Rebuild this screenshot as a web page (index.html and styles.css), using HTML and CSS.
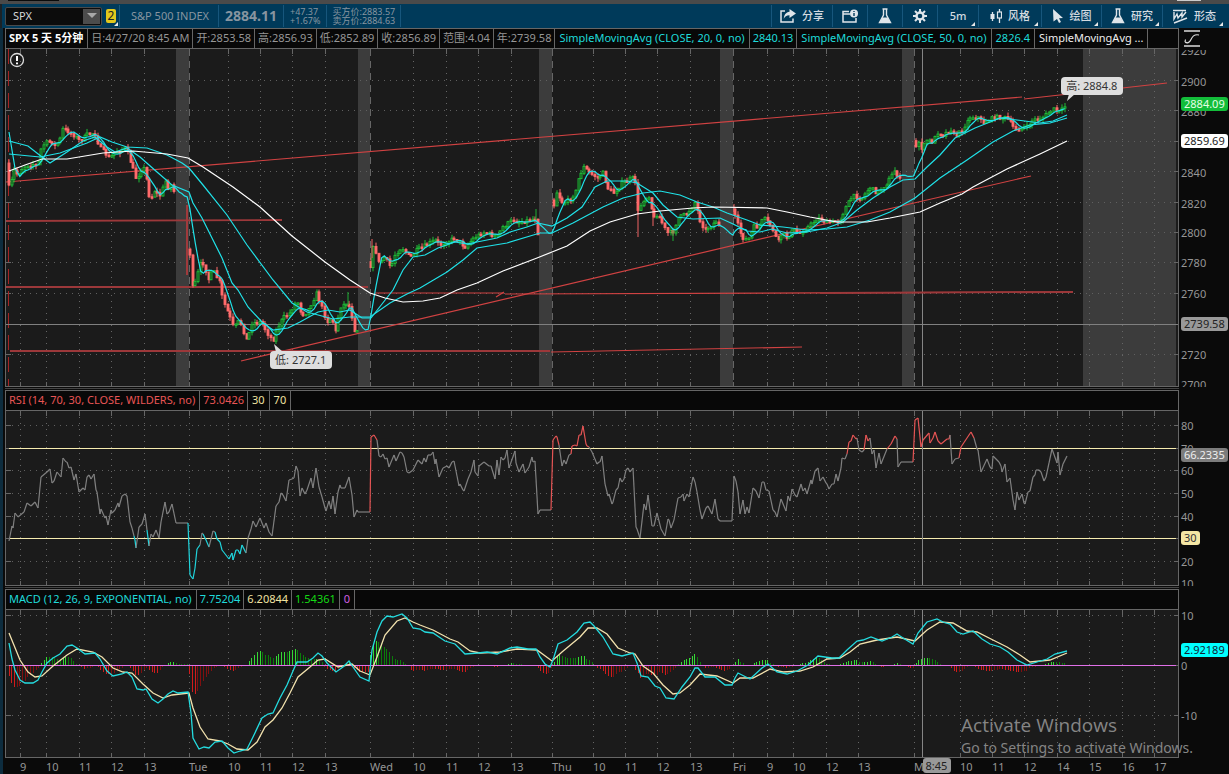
FILE: index.html
```html
<!DOCTYPE html>
<html lang="zh-CN">
<head>
  <meta charset="UTF-8">
  <title>SPX Charts</title>
  <link rel="stylesheet" href="styles.css">
</head>
<body>

<div class="top-strip"><span class="strip-tab"></span><span class="strip-mark"></span></div>

<header class="toolbar">
  <div class="symbol-box">
    <input class="symbol-input" type="text" value="SPX" aria-label="Symbol">
    <button class="symbol-drop" aria-label="Symbol list"><svg width="10" height="6" viewBox="0 0 10 6"><path d="M0 0h10L5 5z" fill="#a8a8a8"/></svg></button>
  </div>
  <button class="link-badge corner">2</button>
  <div class="quote name">S&amp;P 500 INDEX</div>
  <div class="quote last">2884.11</div>
  <div class="quote pair"><span>+47.37</span><span>+1.67%</span></div>
  <div class="quote pair"><span>买方价:2883.57</span><span>卖方价:2884.63</span></div>
  <nav class="tools">
    <button class="tool share">
      <svg width="16" height="14" viewBox="0 0 16 14"><path d="M5 2H1v11h12V9.500" fill="none" stroke="#dfe5ea" stroke-width="1.500"/><path d="M9.500 0 16 4.500 9.500 9V6.300C6.500 6.200 5 7.500 3.800 9.800 4 6 5.800 3 9.500 2.700z" fill="#dfe5ea"/></svg>
      分享
    </button>
    <button class="tool icon" aria-label="Info">
      <svg width="16" height="14" viewBox="0 0 16 14"><path d="M7 2.500H1V13h13V9M1 5h7" fill="none" stroke="#dfe5ea" stroke-width="1.500"/><circle cx="12" cy="4.500" r="4" fill="#dfe5ea"/><path d="M12 4v3M12 2v1" stroke="#003a5a" stroke-width="1.400"/></svg>
    </button>
    <button class="tool icon" aria-label="Lab">
      <svg width="14" height="16" viewBox="0 0 14 16"><path d="M4.500 1h5M5.500 1v6L1.500 14.500h11L8.500 7V1" fill="none" stroke="#dfe5ea" stroke-width="1.400"/><path d="M4.500 9.500h5l3 5h-11z" fill="#dfe5ea"/></svg>
    </button>
    <button class="tool icon" aria-label="Settings">
      <svg width="14" height="14" viewBox="-7 -7 14 14"><circle r="3.500" fill="none" stroke="#dfe5ea" stroke-width="2.400"/><path d="M0-7v3M0 4v3M-7 0h3M4 0h3M-5-5l2 2M3 3l2 2M-5 5l2-2M3-3l2-2" stroke="#dfe5ea" stroke-width="2"/></svg>
    </button>
    <button class="tool period corner">5m</button>
    <button class="tool style corner">
      <svg width="12" height="14" viewBox="0 0 12 14"><path d="M2.500 3v9M9.500 0v14" stroke="#dfe5ea" stroke-width="1.300"/><rect x="0.500" y="5" width="4" height="5" fill="#dfe5ea"/><rect x="7.500" y="3" width="4" height="6" fill="#003a5a" stroke="#dfe5ea" stroke-width="1.200"/></svg>
      风格
    </button>
    <button class="tool draw corner">
      <svg width="12" height="14" viewBox="0 0 12 14"><path d="M1 0 11 9 7 9.300 9 13 7 14 5 10 1.500 12.500z" fill="#dfe5ea"/></svg>
      绘图
    </button>
    <button class="tool study corner">
      <svg width="14" height="16" viewBox="0 0 14 16"><path d="M4.500 1h5M5.500 1v6L1.500 14.500h11L8.500 7V1" fill="none" stroke="#dfe5ea" stroke-width="1.400"/><path d="M4.500 9.500h5l3 5h-11z" fill="#dfe5ea"/></svg>
      研究
    </button>
    <button class="tool pattern corner">
      <svg width="15" height="15" viewBox="0 0 15 15"><path d="M0 1.500h13M1 3v7l3-5 1 4 4-5v4l4-5M1 14l13-5" fill="none" stroke="#dfe5ea" stroke-width="1.400"/></svg>
      形态
    </button>
  </nav>
</header>

<main class="charts">
  <section class="panel price">
    <div class="side">
      <div class="legend">
        <span class="cell title">SPX 5 天 5分钟</span>
        <span class="cell">日:4/27/20 8:45 AM</span>
        <span class="cell">开:2853.58</span>
        <span class="cell">高:2856.93</span>
        <span class="cell">低:2852.89</span>
        <span class="cell">收:2856.89</span>
        <span class="cell">范围:4.04</span>
        <span class="cell">年:2739.58</span>
        <span class="cell wide cyan">SimpleMovingAvg (CLOSE, 20, 0, no)</span>
        <span class="cell cyan">2840.13</span>
        <span class="cell wide cyan">SimpleMovingAvg (CLOSE, 50, 0, no)</span>
        <span class="cell wide cyan">2826.4</span>
        <span class="cell wide white">SimpleMovingAvg ...</span>
      </div>
      <div class="plot">
        <svg class="canvas" id="price" viewBox="6 49 1172 337" preserveAspectRatio="none"></svg>
        <svg class="alert" width="16" height="16" viewBox="0 0 16 16"><circle cx="8" cy="8" r="6.500" fill="none" stroke="#ddd" stroke-width="1.300"/><path d="M8 4v5M8 10.500v1.700" stroke="#fff" stroke-width="2"/></svg>
        <div class="callout high">高: 2884.8</div>
        <div class="callout low">低: 2727.1</div>
      </div>
    </div>
    <div class="scale">
      <div class="scale-head">
        <svg width="17" height="17" viewBox="0 0 17 17"><path d="M0 1h16M0 16h16" stroke="#ddd" stroke-width="1.500"/><path d="M1 12c2 1.500 4.500 1 6-2.500S11 4 15 5M1 12l.5-2.500M1 12l2.500.8" fill="none" stroke="#ddd" stroke-width="1.200"/></svg>
      </div>
      <div class="scale-body">
        <svg class="canvas" id="price-scale"></svg>
        <span class="tag green">2884.09</span>
        <span class="tag paper">2859.69</span>
        <span class="tag gray">2739.58</span>
      </div>
    </div>
  </section>

  <div class="divider"></div>

  <section class="panel rsi">
    <div class="side">
      <div class="legend">
        <span class="cell red">RSI (14, 70, 30, CLOSE, WILDERS, no)</span>
        <span class="cell red">73.0426</span>
        <span class="cell wide sand">30</span>
        <span class="cell wide sand">70</span>
      </div>
      <div class="plot">
        <svg class="canvas" id="rsi" viewBox="6 411 1172 174" preserveAspectRatio="none"></svg>
      </div>
    </div>
    <div class="scale">
      <div class="scale-head"></div>
      <div class="scale-body">
        <svg class="canvas" id="rsi-scale"></svg>
        <span class="tag dim">66.2335</span>
        <span class="tag yellow">30</span>
      </div>
    </div>
  </section>

  <div class="divider"></div>

  <section class="panel macd">
    <div class="side">
      <div class="legend">
        <span class="cell cyan">MACD (12, 26, 9, EXPONENTIAL, no)</span>
        <span class="cell cyan">7.75204</span>
        <span class="cell sand">6.20844</span>
        <span class="cell lime">1.54361</span>
        <span class="cell wide violet">0</span>
      </div>
      <div class="plot">
        <svg class="canvas" id="macd" viewBox="6 610 1172 147" preserveAspectRatio="none"></svg>
      </div>
    </div>
    <div class="scale">
      <div class="scale-head"></div>
      <div class="scale-body">
        <svg class="canvas" id="macd-scale"></svg>
        <span class="tag aqua">2.92189</span>
      </div>
    </div>
  </section>

  <div class="time-axis">
    <svg class="canvas" id="time-scale"></svg>
    <span class="time-tag">8:45</span>
  </div>
</main>

<div class="watermark">
  <p class="wm-title">Activate Windows</p>
  <p class="wm-text">Go to Settings to activate Windows.</p>
</div>

<script src="chart.js"></script>
</body>
</html>
```
FILE: styles.css
```css
* { box-sizing: border-box; }
body {
  margin: 0;
  height: 100vh;
  display: flex;
  flex-direction: column;
  overflow: hidden;
  position: relative;
  background: #0a0a0a;
  color: #969696;
  font: 11px/14px "Noto Sans", "Noto Sans CJK SC", sans-serif;
}
button, input { font: inherit; color: inherit; border: none; margin: 0; padding: 0; }
button { cursor: pointer; }

.top-strip {
  flex: 0 0 4px;
  display: flex;
  justify-content: space-between;
  background: #4a4a4a;
  padding: 0 28px 0 8px;
}
.strip-tab { width: 51px; height: 1px; background: #0a0a0a; }
.strip-mark { width: 24px; height: 1px; background: #ccc; }

/* toolbar */
.toolbar {
  flex: 0 0 24px;
  display: flex;
  align-items: center;
  background: #003a5a;
  border-left: 2px solid #1c2226;
  padding: 0 3px;
  color: #8795a0;
}
.symbol-box {
  display: flex;
  width: 97px;
  height: 19px;
  padding: 1px;
  background: #0c0c0c;
  border: 1px solid #4a4a4a;
  border-radius: 2px;
}
.symbol-input { flex: 1; min-width: 0; padding-left: 6px; background: none; color: #d8d8d8; outline: none; }
.symbol-drop { width: 17px; background: #4c4c4c; display: flex; align-items: center; justify-content: center; }
.link-badge {
  width: 10px;
  height: 14px;
  margin: 0 3px 0 4px;
  border-radius: 2px;
  background: #e2c71c;
  color: #222;
  font-size: 12px;
  line-height: 14px;
}
.corner { position: relative; }
.corner::after {
  content: "";
  position: absolute;
  right: 3px;
  bottom: 1px;
  border-left: 4px solid transparent;
  border-bottom: 4px solid #e8e8e8;
}
.link-badge::after { right: -2px; bottom: -3px; }
.quote { height: 22px; display: flex; align-items: center; padding: 0 6px; border-left: 1px solid #17567c; white-space: nowrap; }
.quote.name { padding: 0 9px 0 11px; }
.quote.last { font-size: 14px; font-weight: bold; }
.quote.pair { flex-direction: column; align-items: flex-start; justify-content: center; padding: 0 5px 0 6px; font-size: 9px; line-height: 9px; }
.quote.pair:last-of-type { border-right: 1px solid #17567c; }
.tools { margin-left: auto; display: flex; }
.tool {
  height: 22px;
  display: flex;
  align-items: center;
  justify-content: center;
  gap: 6px;
  background: none;
  color: #d4dbe0;
  font-weight: 500;
  border-left: 1px solid #17567c;
}
.tool.icon { width: 35px; }
.tool.share { width: 61px; }
.tool.period { width: 41px; }
.tool.style { width: 63px; }
.tool.draw { width: 60px; }
.tool.study { width: 61px; }
.tool.pattern { width: 64px; }

/* chart panels */
.charts { flex: 1; min-height: 0; display: flex; flex-direction: column; padding-left: 5px; box-shadow: inset 3px 0 #0d2c3e; }
.panel { display: flex; min-height: 0; }
.price { flex: 359 1 0; }
.rsi { flex: 196 1 0; }
.macd { flex: 169 1 0; }
.side { flex: 1; min-width: 0; display: flex; flex-direction: column; border: 1px solid #666; }
.legend { flex: 0 0 19px; display: flex; background: #080808; }
.cell { padding: 0 3px; border-right: 1px solid #666; line-height: 18px; white-space: nowrap; }
.cell:first-child { padding-right: 4px; }
.cell.wide { padding: 0 4px; }
.title { color: #fff; font-weight: bold; }
.white { color: #eee; }
.cyan { color: #1fdada; }
.red { color: #e85555; }
.sand { color: #f0e2a2; }
.lime { color: #14d814; }
.violet { color: #cf5fe0; }
.plot { position: relative; flex: 1; min-height: 0; border-top: 1px solid #666; background: #1b1b1b; }
.canvas { display: block; width: 100%; height: 100%; }
.divider { flex: 0 0 3px; margin-right: 50px; border: solid #0a0a0a; border-width: 1px 0; background: #444; }

.alert { position: absolute; left: 3px; top: 3px; }
.callout {
  position: absolute;
  width: 62px;
  height: 18px;
  border-radius: 4px;
  background: #dedede;
  color: #333;
  line-height: 18px;
  text-align: center;
  white-space: nowrap;
}
.high { left: 90%; top: 8.300%; }
.low { left: 22.500%; top: 89.600%; }

/* value scales */
.scale { flex: 0 0 50px; display: flex; flex-direction: column; }
.scale-head { flex: 0 0 21px; padding: 2px 0 0 5px; }
.scale-body { position: relative; flex: 1; min-height: 0; overflow: hidden; }
.scale text, .time-axis text { fill: #969696; }
.tag {
  position: absolute;
  left: 2px;
  height: 14px;
  padding: 0 3px;
  border-radius: 3px;
  line-height: 13px;
}
.green { top: 13.900%; background: #13bd3a; color: #e6ffe6; }
.paper { top: 24.900%; background: #fff; color: #222; }
.gray { top: 79.300%; background: #999; color: #222; }
.dim { top: 21.200%; background: #7c7c7c; color: #eee; }
.yellow { top: 68.300%; background: #f4e6a4; color: #333; }
.aqua { top: 22.600%; background: #0ff; color: #123; }

.time-axis { position: relative; flex: 0 0 16px; min-height: 0; margin: 0 51px 0 1px; }
.time-axis .canvas { overflow: visible; }
.time-tag {
  position: absolute;
  left: 78.200%;
  top: 0;
  width: 28px;
  height: 15px;
  border-radius: 3px;
  background: #999;
  color: #222;
  line-height: 15px;
  text-align: center;
}

.watermark { position: absolute; right: 36px; bottom: 16px; color: #858585; pointer-events: none; }
.watermark p { margin: 0; white-space: nowrap; }
.wm-title { font: 19px/26px "Open Sans", sans-serif; }
.wm-text { font-size: 14px; line-height: 20px; }
```
FILE: chart.js
```javascript
const NS = 'http://www.w3.org/2000/svg';

function add(parent, tag, attrs, text) {
  const el = document.createElementNS(NS, tag);
  for (const k in attrs) el.setAttribute(k, attrs[k]);
  if (text) el.textContent = text;
  parent.appendChild(el);
  return el;
}

// "x,y x,y ..." -> [[x, y], ...]
const pts = s => s.trim().split(/\s+/).map(p => p.split(',').map(Number));

function valueAt(list, x) {
  for (let i = 1; i < list.length; i++) {
    if (x <= list[i][0]) {
      const [x0, y0] = list[i - 1], [x1, y1] = list[i];
      return y0 + (y1 - y0) * (x - x0) / ((x1 - x0) || 1);
    }
  }
  return list[list.length - 1][1];
}

const line = (svg, list, color, width = 1.2) =>
  add(svg, 'polyline', { points: list.map(p => p.join()).join(' '), fill: 'none', stroke: color, 'stroke-width': width });

const hours = [
  [20, '9'], [46, '10'], [79, '11'], [111, '12'], [144, '13'], [189, 'Tue', 1],
  [228, '10'], [260, '11'], [292, '12'], [325, '13'], [370, 'Wed', 1],
  [413, '10'], [446, '11'], [478, '12'], [511, '13'], [552, 'Thu', 1],
  [593, '10'], [625, '11'], [657, '12'], [690, '13'], [733, 'Fri', 1],
  [767, '9'], [793, '10'], [826, '12'], [858, '13'], [914, 'M', 1],
  [960, '10'], [992, '11'], [1024, '12'], [1057, '14'], [1089, '15'], [1122, '16'], [1154, '17']
];

function grid(svg, top, bottom, levels, dashDays) {
  const g = add(svg, 'g', { stroke: '#666', 'shape-rendering': 'crispEdges' });
  levels.forEach(y => {
    add(g, 'path', { d: `M6 ${y + .5}H1174`, 'stroke-dasharray': '1 5', stroke: '#606060' });
    add(g, 'path', { d: `M6 ${y + .5}h5M1174 ${y + .5}h4` });
  });
  hours.forEach(([x, , day]) => {
    add(g, 'path', { d: `M${x + .5} ${top}V${bottom}`, 'stroke-dasharray': day && dashDays ? '7 5' : '1 5' });
    add(g, 'path', { d: `M${x + .5} ${top}v5M${x + .5} ${bottom - 4}v4` });
  });
}

function crosshair(svg, top, bottom) {
  add(svg, 'path', { d: `M922.5 ${top}V${bottom}`, stroke: '#858585', 'shape-rendering': 'crispEdges' });
}

const closes = pts(`9,187 12,180 14,170 18,175 22,169 27,165 33,164 38,166 41,150 45,143 52,141 53,148 60,140 63,129 68,131 75,136
80,141 88,134 95,133 100,148 110,158 115,152 126,148 130,160 137,181 140,170 145,168 149,195 153,197 155,190 160,196 166,180 168,188
172,184 175,197 188,197 190,257 193,292 197,276 202,260 205,267 209,280 213,270 220,283 223,300 230,317 234,328 240,320 247,341
252,323 262,322 267,332 273,341 278,327 283,318 290,313 297,300 302,315 307,312 312,303 317,293 322,307 327,322 332,318 336,333
340,307 348,302 352,317 355,332 358,329 370,329 371,250 375,247 379,263 385,257 391,268 395,255 402,247 410,258 417,250 423,247
435,240 440,245 455,238 465,247 475,237 485,232 497,237 503,227 513,220 520,222 530,220 536,218 538,233 552,233 554,207 557,192
563,203 570,200 577,190 579,177 584,167 590,173 598,178 603,173 608,188 614,193 622,183 635,177 638,212 643,200 650,195 653,220
658,213 667,233 673,232 678,218 688,213 695,202 700,220 705,230 718,220 721,235 733,235 734,213 742,237 748,240 755,225 758,228
764,218 772,227 778,243 782,233 787,238 793,230 800,233 808,227 818,218 828,223 840,220 847,205 853,196 862,198 870,187 877,193
887,183 895,170 900,180 902,176 914,176 916,148 920,140 922,150 927,140 933,142 938,132 943,135 951,129 955,137 962,130 970,117
978,117 983,123 995,117 1007,118 1015,129 1027,127 1033,120 1042,118 1053,109 1060,112 1067,104`);

const ma20 = pts(`9,141 28,146 42,157 50,163 67,152 83,141 95,137 107,147 115,152 127,148 140,157 157,172 172,185 189,192 193,203
202,218 212,238 222,258 232,283 238,290 248,307 262,322 273,330 288,328 300,322 318,312 328,310 340,312 350,310 362,318 371,318
393,290 403,270 413,257 425,255 438,248 455,242 467,244 497,238 510,232 527,227 538,223 552,226 567,218 582,207 595,187 607,181
627,181 637,183 653,193 663,205 677,217 693,219 720,218 733,224 747,231 760,232 772,229 787,233 807,232 827,228 843,222 857,210
873,198 890,187 903,180 915,179 927,167 940,155 955,138 975,128 1000,118 1017,120 1040,123 1053,121 1067,115`);

const ma50 = pts(`9,154 40,157 60,153 87,143 100,137 112,142 127,147 147,148 167,155 182,163 189,168 203,185 227,215 247,245 273,280
292,303 307,312 333,319 350,317 370,317 390,303 407,294 420,288 447,272 463,260 477,248 507,243 540,233 552,233 573,223 603,207
623,198 643,193 660,191 680,195 697,202 713,207 727,213 747,220 760,225 783,227 807,230 827,229 847,227 870,220 890,212 915,198
940,178 967,160 993,142 1013,131 1030,125 1050,123 1067,118`);

const ma100 = pts(`9,171 25,165 42,159 67,159 103,153 133,151 167,154 188,158 203,167 233,187 260,207 292,236 325,262 350,280 370,293
385,298 403,302 423,301 440,298 457,290 477,283 503,271 537,258 567,246 590,231 610,222 637,214 660,211 693,208 713,207 767,208
787,212 810,217 837,222 867,222 890,218 920,212 940,203 962,194 973,187 1007,169 1040,154 1067,141`);

const nights = [[176, 189], [358, 370], [539, 552], [720, 733], [902, 914]];
const STEP = 2.7;

function drawPrice() {
  const svg = document.getElementById('price');
  nights.concat([[1083, 1176]]).forEach(([a, b]) =>
    add(svg, 'rect', { x: a, y: 49, width: b - a, height: 337, fill: '#3c3c3c' }));
  grid(svg, 49, 386, [80, 110, 141, 171, 202, 232, 262, 293, 324, 354], true);
  add(svg, 'path', { d: 'M8.5 49V386', stroke: '#a32424', 'stroke-dasharray': '15 7' });
  add(svg, 'path', { d: 'M6 324.500H1178', stroke: '#808080', 'shape-rendering': 'crispEdges' });
  crosshair(svg, 49, 386);

  // hand drawn trend lines
  [[6, 182, 1022, 97], [1024, 99, 1167, 83], [241, 361, 914, 203], [914, 203, 1031, 176],
   [496, 297, 504, 292], [375, 293, 504, 293], [505, 294, 1073, 292], [551, 352, 802, 347]].forEach(l =>
    add(svg, 'line', { x1: l[0], y1: l[1], x2: l[2], y2: l[3], stroke: '#d04242', 'stroke-width': 1.2 }));
  [[6, 221, 282, 220], [6, 287, 368, 287], [10, 351, 550, 351], [820, 293, 1073, 292]].forEach(l =>
    add(svg, 'line', { x1: l[0], y1: l[1], x2: l[2], y2: l[3], stroke: '#9c383a', 'stroke-width': 1.8 }));
  add(svg, 'path', { d: 'M187 205V275', stroke: '#a03a3c', 'stroke-width': 2 });

  let seed = 7;
  const rnd = () => (seed = (seed * 16807) % 2147483647) / 2147483647;
  const bars = [];
  let prev = 163;
  for (let x = 9; x <= 1067; x += STEP) {
    const night = nights.some(n => x > n[0] && x < n[1]);
    const y = valueAt(closes, x) + (night ? 0 : (rnd() - .5) * 4);
    bars.push([x, y]);
    const gap = nights.some(n => x >= n[1] && x < n[1] + STEP);
    const open = gap ? y - 6 : prev;
    if (!night) {
      const up = y < open, color = up ? '#1fbf38' : '#ff6b6b';
      const top = Math.min(y, open), h = Math.max(1.5, Math.abs(y - open));
      const px = Math.round(x);
      add(svg, 'path', { d: `M${px} ${top - rnd() * 4}V${top + h + rnd() * 4}`, stroke: color });
      add(svg, 'rect', { x: px - 1, y: top, width: 2, height: h, fill: up ? '#12401b' : color, stroke: color, 'stroke-width': .9 });
    }
    prev = y;
  }
  [[638, 205, 237, '#f06464'], [653, 210, 226, '#f06464'], [673, 228, 241, '#1eb035'], [536, 209, 220, '#1eb035'],
   [348, 292, 305, '#1eb035'], [372, 239, 258, '#f06464'], [734, 204, 216, '#f06464']].forEach(w =>
    add(svg, 'path', { d: `M${w[0]} ${w[1]}V${w[2]}`, stroke: w[3] }));

  const fast = bars.map((b, i) => {
    const part = bars.slice(Math.max(0, i - 4), i + 1);
    return [b[0], part.reduce((s, p) => s + p[1], 0) / part.length];
  });
  line(svg, [[9, 132], [15, 168]].concat(fast.slice(4)), '#20e2e8');
  line(svg, ma20, '#20e2e8');
  line(svg, ma50, '#20e2e8');
  line(svg, ma100, '#fff');

  add(svg, 'path', { d: 'M1069 94H1075L1067 101zM276 352H283L274 344z', fill: '#dedede' });
}

const rsi = pts(`9,541 12,526 13,528 15,513 18,517 24,512 27,503 31,506 35,502 38,508 41,477 47,472 50,469 52,483 54,481 57,472
61,477 63,458 66,462 67,462 69,468 71,467 74,480 76,474 79,492 83,488 85,490 87,477 89,475 91,479 94,474 96,490 97,492 100,514
101,509 105,518 106,516 108,525 111,510 112,513 115,510 118,503 119,507 122,496 125,494 127,496 130,522 132,528 134,536 135,540
136,548 139,527 142,524 145,514 147,530 149,546 151,534 153,537 156,530 159,538 161,522 165,502 167,514 169,512 172,504 176,523
188,523 190,575 193,579 195,568 197,549 200,545 202,533 203,534 206,540 209,547 213,531 215,532 217,539 220,542 222,550 229,559
232,553 233,560 236,550 238,550 240,554 242,545 246,553 248,538 251,529 253,521 256,527 260,518 264,528 266,523 269,532 272,536
276,506 279,502 281,493 283,495 286,501 289,480 292,479 294,478 296,466 298,471 300,496 302,488 305,494 307,490 311,478 313,488
316,468 319,487 322,497 325,508 326,511 329,501 331,509 333,496 335,514 338,492 340,485 341,488 345,488 349,477 352,495 354,517
357,510 358,512 370,512 371,437 374,435 377,440 379,456 381,457 383,454 385,459 387,458 389,467 394,455 396,461 400,452 402,453
404,457 407,472 409,473 413,470 418,460 422,464 424,458 426,462 428,455 431,455 433,452 435,464 436,459 439,477 443,468 447,466
449,468 452,462 454,461 459,486 460,484 463,490 464,491 468,479 471,472 474,460 475,472 478,476 479,466 484,462 489,466 491,466
495,479 497,460 499,475 501,457 503,460 505,458 507,450 509,468 515,451 516,463 519,472 523,464 525,473 529,467 532,457 533,462
535,461 538,514 540,510 551,510 553,440 556,436 557,437 559,445 562,466 564,460 566,464 569,455 571,454 572,446 575,445 577,446
579,435 581,435 583,426 586,444 587,446 589,447 592,452 597,464 599,462 600,462 602,456 605,484 608,496 609,494 612,504 613,502
616,490 618,488 620,478 622,482 624,479 626,470 628,468 630,472 633,468 636,527 637,529 640,538 644,504 646,510 648,495 652,526
654,526 657,513 661,529 665,536 668,519 669,520 671,528 674,520 678,498 681,497 683,494 684,501 687,494 689,497 692,482 693,477
695,482 697,492 700,510 702,519 706,508 708,506 712,514 715,499 718,519 720,521 732,521 734,476 736,481 738,492 740,514 743,500
745,514 747,507 749,513 753,488 756,491 759,498 762,482 764,482 766,490 769,491 773,510 775,512 777,517 781,499 786,511 788,496
790,501 792,489 795,495 797,497 801,484 803,491 805,488 807,494 811,480 812,484 815,471 818,468 820,481 823,477 826,483 827,484
829,489 832,484 834,484 836,474 838,481 841,468 842,458 845,459 847,454 849,442 851,441 853,435 856,439 857,438 859,450 862,452
864,450 866,435 868,441 870,438 872,454 874,450 876,468 879,453 881,464 887,449 891,444 895,436 897,439 898,467 901,462 913,462
915,420 918,418 921,447 923,440 929,433 930,443 933,438 935,432 938,441 941,444 947,439 949,439 950,435 952,464 955,459 959,458
961,447 967,438 971,432 974,438 977,449 978,450 981,472 987,459 990,467 992,469 993,456 999,462 1001,466 1002,472 1005,464
1007,482 1010,478 1013,500 1015,510 1017,492 1019,500 1022,494 1024,503 1025,504 1028,492 1030,491 1033,477 1035,475 1036,470
1039,470 1041,472 1044,481 1046,477 1049,463 1052,449 1057,463 1058,452 1060,475 1063,464 1067,456`);

function drawRsi() {
  const svg = document.getElementById('rsi');
  grid(svg, 411, 585, [425, 448, 470, 493, 516, 538, 561], false);
  add(svg, 'path', { d: 'M9 448.500H1176M9 538.500H1176', stroke: '#f7ecb0', 'shape-rendering': 'crispEdges' });
  crosshair(svg, 411, 585);
  for (let i = 1; i < rsi.length; i++) {
    const y = rsi[i][1];
    const color = y < 448 ? '#e45454' : y > 538 ? '#20d4dc' : '#808080';
    line(svg, [rsi[i - 1], rsi[i]], color);
  }
}

const macd = pts(`9,643 12,659 15,670 20,680 25,683 33,683 38,680 42,672 47,663 53,658 60,654 67,646 72,645 77,648 85,654 95,653
100,659 107,671 113,676 122,674 127,672 132,677 137,689 143,690 146,689 152,699 158,703 163,699 168,694 173,691 178,693 188,692
191,713 193,738 199,749 204,747 209,748 215,742 222,741 228,748 234,753 240,751 247,749 253,737 262,718 268,714 273,713 280,698
287,685 293,671 297,662 307,662 313,658 318,653 322,656 327,663 336,672 343,667 349,661 353,667 360,677 369,681 372,650 377,632
382,621 387,616 393,617 402,614 407,618 413,628 420,629 425,632 433,633 445,641 455,644 465,654 478,653 487,652 497,654 510,648
517,647 528,649 536,649 540,657 545,664 550,667 553,660 558,644 567,640 577,632 584,623 590,622 594,626 603,637 613,654 622,656
633,653 637,663 641,676 648,677 655,686 660,688 666,698 674,699 682,687 690,677 695,668 698,668 705,677 715,677 725,685 732,685
735,678 738,673 750,679 762,668 768,664 777,672 787,674 797,671 808,665 818,656 832,658 839,658 847,650 857,641 863,640 871,637
882,641 892,637 897,634 903,638 913,644 918,633 927,622 937,619 943,622 950,624 957,632 963,634 973,631 982,639 990,644 1000,647
1008,652 1017,660 1027,665 1037,662 1047,659 1055,654 1067,651`);

const signal = pts(`9,633 20,660 28,672 35,677 42,676 53,666 67,655 77,649 93,652 102,657 113,668 123,672 132,673 143,684 153,693
163,698 172,695 189,693 193,708 200,727 208,739 220,741 228,744 237,749 248,750 257,742 265,727 273,720 282,708 290,693 298,677
310,667 318,660 325,659 338,667 352,664 360,671 370,675 377,657 385,635 397,621 405,618 413,622 420,625 433,630 450,639 458,642
470,651 480,653 500,652 517,649 537,650 552,661 562,652 580,637 588,628 597,628 607,634 618,648 630,653 635,654 643,666 653,673
663,685 673,694 680,693 690,685 700,674 717,676 733,683 740,678 753,678 770,669 783,672 800,671 813,667 827,659 840,658 850,652
860,644 877,640 897,637 915,641 927,630 940,622 953,623 967,631 977,632 993,640 1007,647 1020,655 1030,662 1050,660 1067,653`);

function drawMacd() {
  const svg = document.getElementById('macd');
  grid(svg, 610, 757, [615, 665, 715], false);
  let last = 0;
  for (let x = 9; x <= 1067; x += STEP) {
    const d = valueAt(macd, x) - valueAt(signal, x);
    const growing = Math.abs(d) >= Math.abs(last);
    const color = d < 0 ? (growing ? '#35d835' : '#0b7c0b') : (growing ? '#d01c1c' : '#801010');
    add(svg, 'path', { d: `M${Math.floor(x) + .5} 665.5v${d.toFixed(1)}`, stroke: color, 'shape-rendering': 'crispEdges' });
    last = d;
  }
  add(svg, 'rect', { x: 9, y: 665, width: 1167, height: 1, fill: '#e070e8' });
  crosshair(svg, 610, 757);
  line(svg, signal, '#f2e2ae', 1.3);
  line(svg, macd, '#24dce0', 1.3);
}

function scale(id, top, height, labels) {
  const svg = document.getElementById(id);
  labels.forEach(([y, text]) =>
    add(svg, 'text', { x: 2, y: (y - top) / height * 100 + '%', dy: 4 }, text));
}

drawPrice();
drawRsi();
drawMacd();
scale('price-scale', 49, 338, [[50, '2920'], [81, '2900'], [111, '2880'], [172, '2840'], [203, '2820'], [233, '2800'],
  [263, '2780'], [294, '2760'], [355, '2720'], [385, '2700']]);
scale('rsi-scale', 411, 175, [[426, '80'], [449, '70'], [471, '60'], [494, '50'], [517, '40'], [562, '20'], [584, '10']]);
scale('macd-scale', 610, 148, [[616, '10'], [666, '0'], [716, '-10']]);
hours.forEach(([x, text]) =>
  add(document.getElementById('time-scale'), 'text', { x: (x - 6) / 1172 * 100 + '%', y: 13 }, text));
```
